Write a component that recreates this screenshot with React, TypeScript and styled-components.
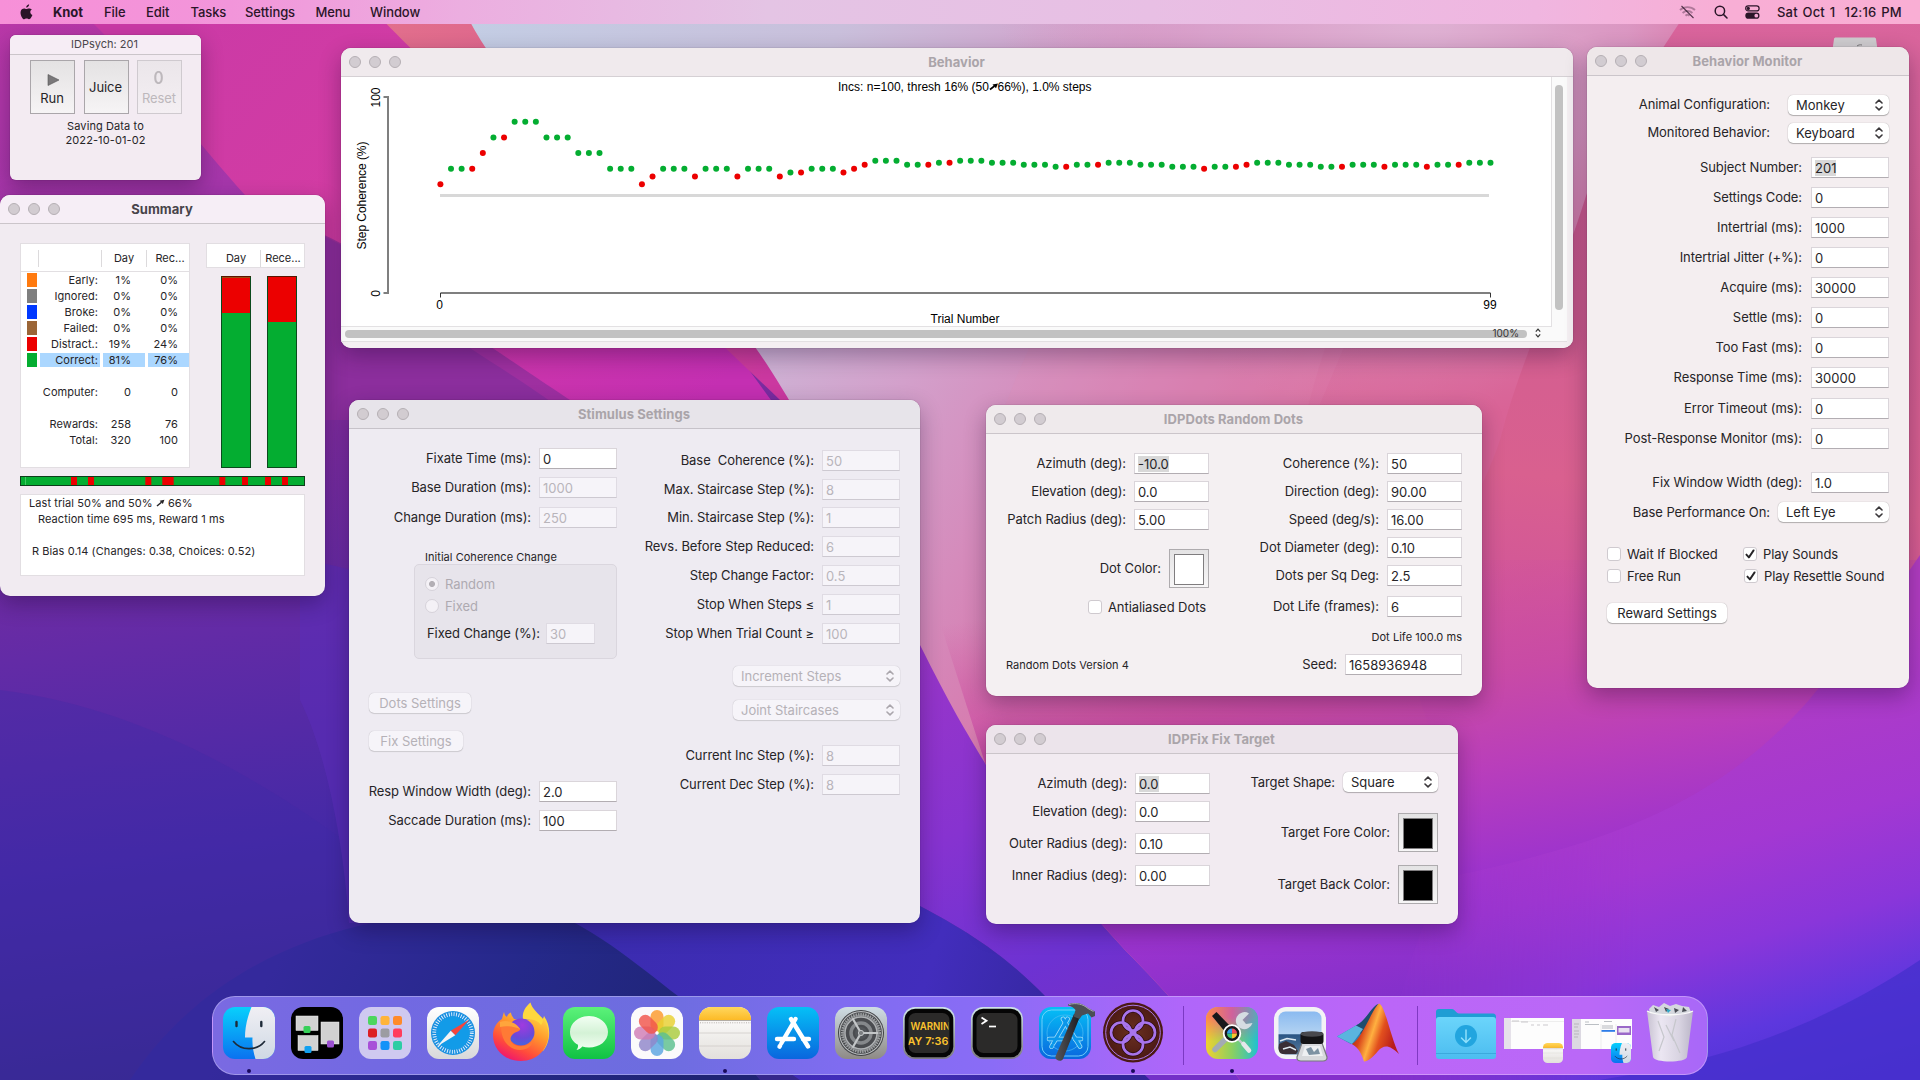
import React from 'react';
import styled, { createGlobalStyle } from 'styled-components';

const UI = `Inter, 'Liberation Sans', sans-serif`;
const HELV = `'Liberation Sans', Arial, sans-serif`;

const Global = createGlobalStyle`
  * { box-sizing: border-box; }
  html, body { margin: 0; padding: 0; }
  body { width: 1920px; height: 1080px; overflow: hidden; font-family: ${UI}; font-size: 13px; color: #262427; }
`;

/* ---------- desktop ---------- */

const Desktop = styled.div`
  position: relative;
  width: 1920px;
  height: 1080px;
  overflow: hidden;
  background: #8b2fc0;
`;

const WallpaperSvg = styled.svg`
  position: absolute;
  inset: 0;
  display: block;
`;

const DriveIcon = styled.svg`
  position: absolute;
  left: 1832px;
  top: 37px;
`;

function Wallpaper() {
  return (
    <WallpaperSvg width="1920" height="1080" viewBox="0 0 1920 1080" preserveAspectRatio="none">
      <defs>
        <linearGradient id="wBase" gradientUnits="userSpaceOnUse" x1="0" y1="0" x2="160" y2="1080">
          <stop offset="0" stopColor="#bc38a8" />
          <stop offset="0.2" stopColor="#a436aa" />
          <stop offset="0.42" stopColor="#7f2c9e" />
          <stop offset="0.6" stopColor="#632ba6" />
          <stop offset="0.8" stopColor="#4429a6" />
          <stop offset="1" stopColor="#35288c" />
        </linearGradient>
        <linearGradient id="wMag" gradientUnits="userSpaceOnUse" x1="200" y1="0" x2="640" y2="460">
          <stop offset="0" stopColor="#cb3aa6" />
          <stop offset="0.4" stopColor="#d33ca3" />
          <stop offset="1" stopColor="#c42fb2" />
        </linearGradient>
        <linearGradient id="wSalmon" gradientUnits="userSpaceOnUse" x1="380" y1="0" x2="760" y2="380">
          <stop offset="0" stopColor="#e2718c" />
          <stop offset="0.7" stopColor="#d8508e" />
          <stop offset="1" stopColor="#cb38a0" />
        </linearGradient>
        <linearGradient id="wPale" gradientUnits="userSpaceOnUse" x1="480" y1="0" x2="1400" y2="560">
          <stop offset="0" stopColor="#c3cde4" />
          <stop offset="0.3" stopColor="#c9bfdb" />
          <stop offset="0.52" stopColor="#d3a0cb" />
          <stop offset="0.72" stopColor="#d680b3" />
          <stop offset="0.88" stopColor="#da6c9d" />
          <stop offset="1" stopColor="#da6295" />
        </linearGradient>
        <radialGradient id="wLilac" gradientUnits="userSpaceOnUse" cx="1420" cy="0" r="420">
          <stop offset="0" stopColor="#dfb6d6" stopOpacity="0.95" />
          <stop offset="0.5" stopColor="#dba6cf" stopOpacity="0.75" />
          <stop offset="1" stopColor="#d98fbd" stopOpacity="0" />
        </radialGradient>
        <linearGradient id="wRose" gradientUnits="userSpaceOnUse" x1="1760" y1="0" x2="1680" y2="760">
          <stop offset="0" stopColor="#da659d" />
          <stop offset="0.3" stopColor="#cf5d92" />
          <stop offset="0.65" stopColor="#d9608f" />
          <stop offset="1" stopColor="#c94aa4" />
        </linearGradient>
        <linearGradient id="wFade" gradientUnits="userSpaceOnUse" x1="1180" y1="560" x2="1260" y2="1020">
          <stop offset="0.05" stopColor="#d0529e" stopOpacity="0" />
          <stop offset="0.35" stopColor="#c84aa6" stopOpacity="0.9" />
          <stop offset="0.55" stopColor="#b93ebb" />
          <stop offset="0.78" stopColor="#9c33ce" />
          <stop offset="1" stopColor="#8430cb" />
        </linearGradient>
        <linearGradient id="wNavy" gradientUnits="userSpaceOnUse" x1="340" y1="860" x2="700" y2="1080">
          <stop offset="0" stopColor="#34299c" />
          <stop offset="0.5" stopColor="#25298a" />
          <stop offset="1" stopColor="#1f2474" />
        </linearGradient>
        <linearGradient id="wIndigo" gradientUnits="userSpaceOnUse" x1="560" y1="900" x2="1060" y2="1080">
          <stop offset="0" stopColor="#3a2cae" />
          <stop offset="0.7" stopColor="#422dbc" />
          <stop offset="1" stopColor="#32269a" />
        </linearGradient>
        <linearGradient id="wViolet" gradientUnits="userSpaceOnUse" x1="900" y1="640" x2="1080" y2="1040">
          <stop offset="0" stopColor="#9a36c8" />
          <stop offset="0.45" stopColor="#8733d0" />
          <stop offset="0.8" stopColor="#6d32d2" />
          <stop offset="1" stopColor="#7430c8" />
        </linearGradient>
        <linearGradient id="wRight" gradientUnits="userSpaceOnUse" x1="1740" y1="660" x2="1860" y2="1080">
          <stop offset="0" stopColor="#b23dc2" />
          <stop offset="0.4" stopColor="#a338d2" />
          <stop offset="0.62" stopColor="#8a36da" />
          <stop offset="0.82" stopColor="#5d37de" />
          <stop offset="1" stopColor="#4a31d0" />
        </linearGradient>
        <linearGradient id="wRightEdge" gradientUnits="userSpaceOnUse" x1="1380" y1="0" x2="1640" y2="0">
          <stop offset="0" stopColor="#fff" stopOpacity="0" />
          <stop offset="1" stopColor="#fff" />
        </linearGradient>
        <mask id="wRightMask"><rect x="1300" y="480" width="620" height="600" fill="url(#wRightEdge)" /></mask>
      </defs>
      <rect width="1920" height="1080" fill="url(#wBase)" />
      <path d="M0 690 C160 710 300 800 420 900 L620 1080 H0Z" fill="#3f2aa6" opacity="0.35" />
      <path d="M90 20 C150 80 200 145 245 195 C290 225 320 233 341 245 C420 330 520 370 600 440 L800 440 L480 0 H70Z" fill="url(#wMag)" />
      <path d="M320 233 C400 270 450 320 491 347 C540 380 570 400 600 420 H325Z" fill="#8f2f9c" opacity="0.75" />
      <path d="M375 12 C420 60 560 190 780 400 L800 400 L468 0 H370Z" fill="url(#wSalmon)" />
      <path d="M300 560 C360 566 460 600 560 700 L700 923 H349 C345 860 330 760 300 700Z" fill="#5a2db8" opacity="0.6" />
      <path d="M130 1080 C230 930 420 890 580 924 C640 950 670 985 700 1010 L760 1080Z" fill="url(#wNavy)" />
      <path d="M560 915 C620 945 660 985 700 1012 L800 1080 H1160 C1110 1040 1070 1015 1045 996 C1010 960 970 930 900 896 L700 900Z" fill="url(#wIndigo)" />
      <path d="M880 600 L985 700 L1320 900 V1080 H1150 C1110 1040 1070 1015 1045 996 C1010 960 970 930 900 896Z" fill="url(#wViolet)" />
      <g id="coral">
        <path d="M460 0 C500 100 620 180 755 347 C800 410 860 530 920 645 C950 705 965 730 985 763 C1020 830 1070 890 1125 950 C1160 985 1200 1030 1240 1080 H1920 V0Z" fill="url(#wPale)" />
        <path d="M1240 24 C1190 80 1060 250 1000 420 L985 620 L1200 620 C1300 500 1400 200 1455 48 L1462 0 H1255Z" fill="#dd8fb8" opacity="0.22" />
        <path d="M1462 0 C1440 80 1340 260 1300 440 L1480 640 L1700 500 L1700 0Z" fill="#d9689a" opacity="0.28" />
        <rect x="1000" y="0" width="840" height="420" fill="url(#wLilac)" />
        <path d="M1695 0 C1640 80 1605 140 1586 196 C1560 280 1520 360 1500 440 C1480 500 1440 560 1400 640 L1460 820 L1920 800 V0Z" fill="url(#wRose)" />
        <path d="M920 560 H1920 V1080 H1240 C1200 1030 1160 985 1125 950 C1070 890 1020 830 985 763Z" fill="url(#wFade)" />
        <path d="M1920 555 C1890 600 1850 650 1809 700 C1720 800 1620 840 1458 875 C1420 900 1400 1000 1380 1080 H1920Z" fill="url(#wRight)" mask="url(#wRightMask)" />
      </g>
      <path d="M1600 1080 C1690 1066 1800 1040 1920 960 V1080Z" fill="#4630cd" opacity="0.8" />
    </WallpaperSvg>
  );
}

/* ---------- menu bar ---------- */

const MenuBar = styled.div`
  position: relative;
  display: flex;
  align-items: center;
  height: 24px;
  padding: 0 19px 1px 20px;
  background: linear-gradient(90deg, #f790d8 0%, #f295da 12%, #ecaee0 24%, #e4c4e4 40%, #e8bfe4 60%, #f0b6e0 80%, #f8aed5 90%, #f9aed4 100%);
`;

const MenuItem = styled.span<{ $w: number; $bold?: boolean }>`
  width: ${p => p.$w}px;
  font-weight: ${p => (p.$bold ? 700 : 450)};
  letter-spacing: -0.08px;
  color: #2a1528;
`;

const MenuSpacer = styled.div`
  flex: 1;
`;

const Clock = styled.span`
  margin-left: 17px;
  width: 124px;
  white-space: pre;
  text-align: right;
  letter-spacing: 0.2px;
  word-spacing: 1px;
  font-weight: 450;
  color: #2a1528;
`;

const AppleSvg = styled.svg`
  margin-right: 20px;
  flex: none;
`;

const StatusIcon = styled.svg<{ $ml: number }>`
  margin-left: ${p => p.$ml}px;
  flex: none;
`;

/* ---------- windows ---------- */

const Win = styled.section<{ $x: number; $y: number; $w: number; $h: number; $bg: string; $r?: number; $front?: boolean }>`
  position: absolute;
  left: ${p => p.$x}px;
  top: ${p => p.$y}px;
  width: ${p => p.$w}px;
  height: ${p => p.$h}px;
  display: flex;
  flex-direction: column;
  overflow: hidden;
  border-radius: ${p => p.$r ?? 10}px;
  background: ${p => p.$bg};
`;

const Shadow = styled.div<{ $x: number; $y: number; $w: number; $h: number; $r?: number }>`
  position: absolute;
  left: ${p => p.$x}px;
  top: ${p => p.$y}px;
  width: ${p => p.$w}px;
  height: ${p => p.$h}px;
  border-radius: ${p => p.$r ?? 10}px;
  box-shadow: 0 0 1px rgba(0, 0, 0, 0.5), 0 8px 22px rgba(20, 0, 40, 0.32);
`;

const TitleBar = styled.header<{ $bg: string; $line: string }>`
  display: grid;
  grid-template-columns: 60px 1fr 60px;
  align-items: center;
  flex: none;
  height: 29px;
  background: ${p => p.$bg};
  border-bottom: 1px solid ${p => p.$line};
`;

const Lights = styled.div`
  display: flex;
  gap: 8px;
  padding-left: 8px;
`;

const Light = styled.i`
  width: 12px;
  height: 12px;
  border-radius: 50%;
  background: #d2ccd1;
  border: 1px solid #b5afb4;
`;

const Title = styled.h1<{ $active?: boolean }>`
  margin: 0 1px 1px 0;
  text-align: center;
  font-size: 13px;
  line-height: 16px;
  font-weight: 700;
  letter-spacing: 0.05px;
  white-space: nowrap;
  color: ${p => (p.$active ? '#48444a' : '#aaa4a9')};
`;

interface WindowProps {
  x: number; y: number; w: number; h: number;
  bg: string; bar: string; line?: string; title: string; active?: boolean;
  children: React.ReactNode;
}

function Window({ x, y, w, h, bg, bar, line = '#cbc5ca', title, active, children }: WindowProps) {
  return (
    <>
      <Shadow $x={x} $y={y} $w={w} $h={h} />
      <Win $x={x} $y={y} $w={w} $h={h} $bg={bg}>
        <TitleBar $bg={bar} $line={line}>
          <Lights><Light /><Light /><Light /></Lights>
          <Title $active={active}>{title}</Title>
        </TitleBar>
        {children}
      </Win>
    </>
  );
}

/* ---------- form parts ---------- */

const Body = styled.div<{ $pad: string }>`
  display: flex;
  justify-content: space-between;
  flex: 1;
  padding: ${p => p.$pad};
`;

const Column = styled.div<{ $w: number; $pt?: number }>`
  display: flex;
  flex-direction: column;
  width: ${p => p.$w}px;
  padding-top: ${p => p.$pt ?? 0}px;
`;

const Row = styled.label<{ $mt?: number; $gap?: number; $left?: boolean; $pad?: string }>`
  display: flex;
  align-items: center;
  justify-content: ${p => (p.$left ? 'flex-start' : 'flex-end')};
  gap: ${p => p.$gap ?? 8}px;
  margin-top: ${p => p.$mt ?? 0}px;
  padding: ${p => p.$pad ?? '0'};
`;

const Label = styled.span<{ $up?: number }>`
  line-height: 16px;
  white-space: pre;
  letter-spacing: -0.07px;
  padding-bottom: ${p => p.$up ?? 1}px;
`;

const Field = styled.span<{ $w: number; $off?: boolean }>`
  flex: none;
  width: ${p => p.$w}px;
  height: 21px;
  padding: 0 3px;
  line-height: 20px;
  background: ${p => (p.$off ? '#f6f4f9' : '#ffffff')};
  border: 1px solid ${p => (p.$off ? '#dfdbe3' : '#dad5da')};
  border-bottom-color: ${p => (p.$off ? '#cdc9d1' : '#b2adb2')};
  color: ${p => (p.$off ? '#b9b5bb' : '#262427')};
`;

const Marked = styled.span`
  display: inline-block;
  height: 16px;
  line-height: 16px;
  background: #d8d8d8;
`;

const Pop = styled.span<{ $w: number; $off?: boolean }>`
  flex: none;
  display: flex;
  align-items: center;
  justify-content: space-between;
  width: ${p => p.$w}px;
  height: 20px;
  padding: 0 6px 0 8px;
  line-height: 19px;
  border-radius: 5px;
  background: ${p => (p.$off ? '#f6f4f9' : '#ffffff')};
  box-shadow: 0 0 1px rgba(0, 0, 0, ${p => (p.$off ? 0.25 : 0.35)}), 0 1px 1px rgba(0, 0, 0, ${p => (p.$off ? 0.12 : 0.25)});
  color: ${p => (p.$off ? '#b5b1b7' : '#262427')};
`;

function Popup({ w, off, children }: { w: number; off?: boolean; children: React.ReactNode }) {
  return (
    <Pop $w={w} $off={off}>
      {children}
      <svg width="8" height="12" viewBox="0 0 8 12" fill="none" stroke={off ? '#aaa6ac' : '#3a373a'} strokeWidth="1.6" strokeLinecap="round" strokeLinejoin="round">
        <path d="M1 4 4 1.2 7 4M1 8 4 10.8 7 8" />
      </svg>
    </Pop>
  );
}

const PushButton = styled.button<{ $w: number; $mt: number; $off?: boolean }>`
  display: block;
  width: ${p => p.$w}px;
  height: 20px;
  margin: ${p => p.$mt}px 0 0;
  padding: 0;
  border: 0;
  border-radius: 5px;
  font: 13px/19px ${UI};
  background: ${p => (p.$off ? '#f6f4f9' : '#ffffff')};
  box-shadow: 0 0 1px rgba(0, 0, 0, ${p => (p.$off ? 0.25 : 0.35)}), 0 1px 1px rgba(0, 0, 0, ${p => (p.$off ? 0.12 : 0.25)});
  color: ${p => (p.$off ? '#b5b1b7' : '#262427')};
`;

const Box = styled.span`
  flex: none;
  display: flex;
  align-items: center;
  justify-content: center;
  width: 14px;
  height: 14px;
  margin-bottom: 1px;
  border-radius: 3px;
  border: 1px solid #cfcacf;
  background: #fff;
`;

function Check({ on }: { on?: boolean }) {
  return (
    <Box>
      {on && (
        <svg width="12" height="12" viewBox="0 0 12 12" fill="none" stroke="#262427" strokeWidth="1.9" strokeLinecap="round" strokeLinejoin="round">
          <path d="M2.4 6.6 4.9 9.4 9.6 2.4" />
        </svg>
      )}
    </Box>
  );
}

const Radio = styled.span<{ $on?: boolean }>`
  width: 14px;
  height: 14px;
  border-radius: 50%;
  border: 1px solid #d6d2da;
  background: ${p => (p.$on ? 'radial-gradient(circle, #b3afb5 0 2.6px, #f4f1f6 3.4px)' : '#f4f1f6')};
`;

const Well = styled.span<{ $c: string }>`
  flex: none;
  width: 40px;
  height: 39px;
  padding: 4px;
  border: 1px solid #aeabae;
  background: linear-gradient(#e4e3e4, #f7f6f7);
  &::after {
    content: '';
    display: block;
    height: 29px;
    border: 1px solid #7f7d7f;
    background: ${p => p.$c};
  }
`;

const Small = styled.span<{ $mt: number; $right?: boolean; $pl?: number }>`
  display: block;
  height: 14px;
  margin-top: ${p => p.$mt}px;
  padding-left: ${p => p.$pl ?? 0}px;
  font-size: 11px;
  line-height: 14px;
  letter-spacing: 0.04px;
  white-space: pre;
  text-align: ${p => (p.$right ? 'right' : 'left')};
`;

interface FProps { label: string; value: string; w: number; mt?: number; gap?: number; off?: boolean; sel?: boolean }

function FormField({ label, value, w, mt, gap, off, sel }: FProps) {
  return (
    <Row $mt={mt} $gap={gap}>
      <Label>{label}</Label>
      <Field $w={w} $off={off}>{sel ? <Marked>{value}</Marked> : value}</Field>
    </Row>
  );
}

/* ---------- IDPsych palette ---------- */

const PaletteTitle = styled.div`
  flex: none;
  height: 20px;
  padding-right: 2px;
  line-height: 19px;
  font-size: 11px;
  text-align: center;
  color: #4a464b;
  background: #f6edf5;
  border-bottom: 1px solid #cbc5ca;
`;

const PaletteButtons = styled.div`
  display: flex;
  gap: 8.5px;
  padding: 5px 0 0 20px;
`;

const Bevel = styled.div<{ $off?: boolean }>`
  display: flex;
  flex-direction: column;
  align-items: center;
  justify-content: center;
  width: 45px;
  height: 54px;
  padding-right: 1px;
  border: 1px solid ${p => (p.$off ? '#cfcacf' : '#aaa6aa')};
  background: ${p => (p.$off ? 'linear-gradient(#ebe6ea, #f4eff3)' : 'linear-gradient(#e4e2e3, #f6f4f5)')};
  color: ${p => (p.$off ? '#bdb8bc' : '#262427')};
`;

const BevelText = styled.span<{ $pt?: number }>`
  line-height: 16px;
  letter-spacing: -0.1px;
  padding-top: ${p => p.$pt ?? 0}px;
`;

const PlayGlyph = styled.svg`
  margin: 5px 0 0 3px;
`;

const BevelZero = styled.span`
  height: 20px;
  line-height: 20px;
  font-size: 17px;
  font-weight: 600;
  transform: scaleX(0.9);
`;

const SavingText = styled.div`
  margin-top: 5px;
  text-align: center;
  font-size: 11px;
  line-height: 14px;
  letter-spacing: 0.1px;
`;

function PsychPalette() {
  return (
    <>
      <Shadow $x={10} $y={35} $w={191} $h={145} $r={6} />
      <Win $x={10} $y={35} $w={191} $h={145} $bg="#f3ebf2" $r={6}>
        <PaletteTitle>IDPsych: 201</PaletteTitle>
        <PaletteButtons>
          <Bevel>
            <PlayGlyph width="13" height="12" viewBox="0 0 13 12">
              <path d="M1 0.5 12 6 1 11.5Z" fill="#7a787a" stroke="#555" strokeWidth="0.6" />
            </PlayGlyph>
            <BevelText $pt={4}>Run</BevelText>
          </Bevel>
          <Bevel><BevelText>Juice</BevelText></Bevel>
          <Bevel $off><BevelZero>0</BevelZero><BevelText $pt={2}>Reset</BevelText></Bevel>
        </PaletteButtons>
        <SavingText>Saving Data to<br />2022-10-01-02</SavingText>
      </Win>
    </>
  );
}

/* ---------- Summary ---------- */

const SummaryBody = styled.div`
  display: flex;
  flex-direction: column;
  padding: 19px 20px 0;
  font-size: 11px;
`;

const SummaryTop = styled.div`
  display: flex;
  gap: 16px;
`;

const CountTable = styled.div`
  width: 170px;
  height: 225px;
  border: 1px solid #e2dee2;
  background: #fff;
`;

const HeadRow = styled.div<{ $cols: string }>`
  display: grid;
  grid-template-columns: ${p => p.$cols};
  height: 28px;
  padding: 6px 0 5px;
  border-bottom: 1px solid #e2dfe2;
  text-align: center;
  line-height: 17px;
`;

const HeadCell = styled.span<{ $sep?: boolean; $pl?: number }>`
  border-right: ${p => (p.$sep ? '1px solid #dcdadc' : '0')};
  padding-left: ${p => p.$pl ?? 0}px;
  white-space: nowrap;
`;

const CountRow = styled.div`
  display: grid;
  grid-template-columns: 10px 60px 42px 41px;
  column-gap: 3px;
  height: 16px;
  padding: 1px 0 1px 6px;
  line-height: 14px;
  text-align: right;
`;

const Cell = styled.span<{ $pr?: number; $hl?: boolean; $bg?: string }>`
  padding-right: ${p => p.$pr ?? 0}px;
  letter-spacing: 0.05px;
  background: ${p => p.$bg ?? (p.$hl ? '#abd7ff' : 'transparent')};
`;

const BarSide = styled.div`
  width: 99px;
`;

const BarHead = styled.div`
  display: grid;
  grid-template-columns: 54px 1fr;
  height: 25px;
  padding: 6px 0 1px;
  border: 1px solid #e2dee2;
  background: #fff;
  text-align: center;
  line-height: 17px;
`;

const BarPair = styled.div`
  display: flex;
  gap: 16px;
  margin-top: 8px;
  padding-left: 15px;
`;

const StackBar = styled.div`
  display: flex;
  flex-direction: column;
  width: 30px;
  height: 192px;
  border: 1px solid #0b4a1d;
  border-top-color: #5c1400;
`;

const BarPart = styled.i<{ $h?: number; $c: string }>`
  flex: ${p => (p.$h ? `0 0 ${p.$h}px` : 1)};
  background: ${p => p.$c};
`;

const Strip = styled.div`
  height: 10px;
  margin-top: 8px;
  border: 1px solid #0d3d1b;
  background: #04ad31;
`;

const LogBox = styled.div`
  height: 82px;
  margin-top: 8px;
  padding: 1px 0;
  border: 1px solid #e2dee2;
  background: #fff;
`;

const LogLine = styled.div<{ $pl: number }>`
  height: 16px;
  line-height: 15px;
  padding-left: ${p => p.$pl}px;
  white-space: pre;
  letter-spacing: 0.08px;
`;

const RED = '#ec0000';
const GREEN = '#04ad31';
const counts: [string | null, string, string, string][] = [
  ['#ff7a0f', 'Early:', '1%', '0%'],
  ['#7f7f7f', 'Ignored:', '0%', '0%'],
  ['#0038ff', 'Broke:', '0%', '0%'],
  ['#9b6536', 'Failed:', '0%', '0%'],
  [RED, 'Distract.:', '19%', '24%'],
  [GREEN, 'Correct:', '81%', '76%'],
  [null, '', '', ''],
  [null, 'Computer:', '0', '0'],
  [null, '', '', ''],
  [null, 'Rewards:', '258', '76'],
  [null, 'Total:', '320', '100'],
];
const stripMarks: [number, number][] = [[50, 6], [67, 6], [124.3, 6], [141.3, 11.4], [198.3, 6], [221, 6], [244, 6], [261, 6]];

function Arrow() {
  return (
    <svg width="9" height="8" viewBox="0 0 9 8">
      <path d="M1 7 5.5 3.2" stroke="currentColor" strokeWidth="1.5" />
      <path d="M8.4 0.8 3.6 1.8 6.9 5Z" fill="currentColor" />
    </svg>
  );
}

function Summary() {
  return (
    <Window x={0} y={195} w={325} h={401} bg="#f1ebf1" bar="#f6eef6" title="Summary" active>
      <SummaryBody>
        <SummaryTop>
          <CountTable>
            <HeadRow $cols="18px 63px 45px 1fr">
              <HeadCell $sep /><HeadCell $sep />
              <HeadCell $sep>Day</HeadCell><HeadCell $pl={4}>Rec...</HeadCell>
            </HeadRow>
            {counts.map(([c, name, day, rec], i) => (
              <CountRow key={i}>
                <Cell $bg={c ?? 'transparent'} />
                <Cell $pr={2} $hl={i === 5}>{name}</Cell>
                <Cell $pr={14} $hl={i === 5}>{day}</Cell>
                <Cell $pr={11} $hl={i === 5}>{rec}</Cell>
              </CountRow>
            ))}
          </CountTable>
          <BarSide>
            <BarHead><HeadCell $sep $pl={5}>Day</HeadCell><HeadCell $pl={1}>Rece...</HeadCell></BarHead>
            <BarPair>
              <StackBar><BarPart $h={1} $c="#9b4d10" /><BarPart $h={35} $c={RED} /><BarPart $c={GREEN} /></StackBar>
              <StackBar><BarPart $h={45} $c={RED} /><BarPart $c={GREEN} /></StackBar>
            </BarPair>
          </BarSide>
        </SummaryTop>
        <Strip>
          <svg width="283" height="8" viewBox="0 0 283 8" style={{ display: 'block' }}>
            <rect x="4" width="1" height="8" fill="#3fc862" />
            {stripMarks.map(([x, w]) => <rect key={x} x={x} width={w} height="8" fill={RED} />)}
          </svg>
        </Strip>
        <LogBox>
          <LogLine $pl={8}>Last trial 50% and 50% <Arrow /> 66%</LogLine>
          <LogLine $pl={17}>Reaction time 695 ms, Reward 1 ms</LogLine>
          <LogLine $pl={0}> </LogLine>
          <LogLine $pl={11}>R Bias 0.14 (Changes: 0.38, Choices: 0.52)</LogLine>
        </LogBox>
      </SummaryBody>
    </Window>
  );
}

/* ---------- Behavior plot ---------- */

const PlotArea = styled.div`
  display: grid;
  grid-template-columns: 1211px 15px 1fr;
  grid-template-rows: 250px 15px 1fr;
  flex: 1;
  background: #f4eff2;
`;

const Plot = styled.div`
  background: #fff;
  border-right: 1px solid #e3e1e3;
  border-bottom: 1px solid #e3e1e3;
`;

const VTrack = styled.div`
  padding: 8px 0 0 3px;
  background: #fafafa;
`;

const VThumb = styled.div`
  width: 8px;
  height: 225px;
  border-radius: 4px;
  background: #c2c2c2;
`;

const HTrack = styled.div`
  grid-column: 1 / 3;
  display: flex;
  padding: 3px 0 0 4px;
  background: #fafafa;
  border-bottom: 1px solid #e3e0e2;
`;

const HThumb = styled.div`
  display: flex;
  justify-content: flex-end;
  width: 1182px;
  height: 8px;
  padding-right: 8px;
  border-radius: 4px;
  background: #c2c2c2;
  font-size: 10px;
  line-height: 6px;
  color: #333;
`;

const ZoomArrows = styled.svg`
  margin: -2px 0 0 8px;
`;

const seq =
  'r8 g16 g16 r16 r24 g32 r32 g40 g40 g40 g32 g32 g32 g24 g24 g24 g16 g16 g16 r8 r12 g16 g16 g16 r12 g16 g16 g16 r12 g16 g16 g16 r12 g14 r14 g16 g16 g16 r14 r16 r18 g20 g20 g20 g18 g18 r18 g19 r19 g20 g20 g20 g19 g19 g19 g18 g18 g18 g17 r17 g18 g18 r18 g19 g19 g19 g18 g18 g18 g17 g17 g17 r16 g17 g17 r17 r18 g19 g19 g19 g18 g18 g18 g17 g17 r17 g18 g18 g18 r17 g18 g18 g18 r17 g18 g18 r18 g19 g19 g19'.split(' ');

function BehaviorPlot() {
  return (
    <svg width="1209" height="248" viewBox="341 77 1209 248" style={{ display: 'block' }} fontFamily={HELV} fontSize="12" fill="#000">
      <g stroke="#7f7f7f" strokeWidth="2" fill="none">
        <path d="M383.500 97H388V293H383.500" />
        <path d="M440.500 293H1490.500" />
      </g>
      <path d="M440.500 293V297.500M1490.500 293V297.500" stroke="#333" strokeWidth="1" />
      <path d="M440 195.500H1489" stroke="#d8d8d8" strokeWidth="3" />
      {seq.map((s, i) => (
        <circle key={i} cx={440.4 + i * 10.607} cy={200 - Number(s.slice(1)) * 1.957} r="3" fill={s[0] === 'r' ? RED : GREEN} />
      ))}
      <text x="838" y="91" textLength="151" lengthAdjust="spacing">Incs: n=100, thresh 16% (50</text>
      <path d="M990 89.500 994.500 86" stroke="#000" strokeWidth="1.600" />
      <path d="M998 83.500 992.500 84.500 996 88.200Z" />
      <text x="997.500" y="91" textLength="94" lengthAdjust="spacing">66%), 1.0% steps</text>
      <text x="965" y="322.500" textAnchor="middle">Trial Number</text>
      <text x="439.600" y="309" textAnchor="middle">0</text>
      <text x="1490" y="309" textAnchor="middle">99</text>
      <text transform="translate(366 195.500) rotate(-90)" textAnchor="middle" textLength="108">Step Coherence (%)</text>
      <text transform="translate(380 97.500) rotate(-90)" textAnchor="middle">100</text>
      <text transform="translate(380 293.500) rotate(-90)" textAnchor="middle">0</text>
    </svg>
  );
}

function Behavior() {
  return (
    <Window x={341} y={48} w={1232} h={300} bg="#f4eff2" bar="#f0eaed" line="#d5d0d4" title="Behavior">
      <PlotArea>
        <Plot><BehaviorPlot /></Plot>
        <VTrack><VThumb /></VTrack>
        <span />
        <HTrack>
          <HThumb>100%</HThumb>
          <ZoomArrows width="6" height="10" viewBox="0 0 6 10" fill="none" stroke="#333" strokeWidth="1.2">
            <path d="M0.8 3.6 3 1.2 5.2 3.6M0.8 6.4 3 8.8 5.2 6.4" />
          </ZoomArrows>
        </HTrack>
        <span />
      </PlotArea>
    </Window>
  );
}

/* ---------- Stimulus settings ---------- */

const GroupBox = styled.div`
  height: 95px;
  margin-left: 45px;
  padding: 11px 21px 0 10px;
  border: 1px solid #dad6de;
  border-radius: 5px;
  background: #e7e4eb;
`;

const RadioRow = styled.label<{ $mt?: number }>`
  display: flex;
  align-items: center;
  gap: 6px;
  height: 16px;
  margin-top: ${p => p.$mt ?? 0}px;
  letter-spacing: -0.07px;
  color: #aeaab1;
`;

function Stimulus() {
  return (
    <Window x={349} y={400} w={571} h={523} bg="#eeebf2" bar="#e7e4ea" line="#c6c2c9" title="Stimulus Settings">
      <Body $pad="0 20px">
        <Column $w={248} $pt={19}>
          <FormField label="Fixate Time (ms):" value="0" w={78} />
          <FormField label="Base Duration (ms):" value="1000" w={78} mt={8} off />
          <FormField label="Change Duration (ms):" value="250" w={78} mt={9} off />
          <Small $mt={22} $pl={56}>Initial Coherence Change</Small>
          <GroupBox>
            <RadioRow><Radio $on />Random</RadioRow>
            <RadioRow $mt={6}><Radio />Fixed</RadioRow>
            <FormField label="Fixed Change (%):" value="30" w={49} mt={9} gap={6} off />
          </GroupBox>
          <PushButton $w={102} $mt={34} $off>Dots Settings</PushButton>
          <PushButton $w={94} $mt={18} $off>Fix Settings</PushButton>
          <FormField label="Resp Window Width (deg):" value="2.0" w={78} mt={30} />
          <FormField label="Saccade Duration (ms):" value="100" w={78} mt={8} />
        </Column>
        <Column $w={255} $pt={21}>
          <FormField label="Base  Coherence (%):" value="50" w={78} off />
          <FormField label="Max. Staircase Step (%):" value="8" w={78} mt={8} off />
          <FormField label="Min. Staircase Step (%):" value="1" w={78} mt={7} off />
          <FormField label="Revs. Before Step Reduced:" value="6" w={78} mt={8} off />
          <FormField label="Step Change Factor:" value="0.5" w={78} mt={8} off />
          <FormField label="Stop When Steps ≤" value="1" w={78} mt={8} off />
          <FormField label="Stop When Trial Count ≥" value="100" w={78} mt={8} off />
          <Row $mt={22}><Popup w={167} off>Increment Steps</Popup></Row>
          <Row $mt={14}><Popup w={167} off>Joint Staircases</Popup></Row>
          <FormField label="Current Inc Step (%):" value="8" w={78} mt={25} off />
          <FormField label="Current Dec Step (%):" value="8" w={78} mt={8} off />
        </Column>
      </Body>
    </Window>
  );
}

/* ---------- Random dots ---------- */

function RandomDots() {
  return (
    <Window x={986} y={405} w={496} h={291} bg="#f4f0f2" bar="#efeaec" title="IDPDots Random Dots">
      <Body $pad="19px 20px 0">
        <Column $w={203}>
          <FormField label="Azimuth (deg):" value="-10.0" w={75} sel />
          <FormField label="Elevation (deg):" value="0.0" w={75} mt={7} />
          <FormField label="Patch Radius (deg):" value="5.00" w={75} mt={7} />
          <Row $mt={19}><Label>Dot Color:</Label><Well $c="#ffffff" /></Row>
          <Row $mt={11} $gap={6} $pad="0 3px 0 0"><Check /><Label>Antialiased Dots</Label></Row>
          <Small $mt={42}>Random Dots Version 4</Small>
        </Column>
        <Column $w={220}>
          <FormField label="Coherence (%):" value="50" w={75} />
          <FormField label="Direction (deg):" value="90.00" w={75} mt={7} />
          <FormField label="Speed (deg/s):" value="16.00" w={75} mt={7} />
          <FormField label="Dot Diameter (deg):" value="0.10" w={75} mt={7} />
          <FormField label="Dots per Sq Deg:" value="2.5" w={75} mt={7} />
          <FormField label="Dot Life (frames):" value="6" w={75} mt={10} />
          <Small $mt={13} $right>Dot Life 100.0 ms</Small>
          <FormField label="Seed:" value="1658936948" w={117} mt={10} />
        </Column>
      </Body>
    </Window>
  );
}

/* ---------- Fix target ---------- */

function FixTarget() {
  return (
    <Window x={986} y={725} w={472} h={199} bg="#f2ebf1" bar="#ece4eb" title="IDPFix Fix Target">
      <Body $pad="0 20px">
        <Column $w={204} $pt={19}>
          <FormField label="Azimuth (deg):" value="0.0" w={75} sel />
          <FormField label="Elevation (deg):" value="0.0" w={75} mt={7} />
          <FormField label="Outer Radius (deg):" value="0.10" w={75} mt={11} />
          <FormField label="Inner Radius (deg):" value="0.00" w={75} mt={11} />
        </Column>
        <Column $w={200} $pt={18}>
          <Row><Label $up={0}>Target Shape:</Label><Popup w={95}>Square</Popup></Row>
          <Row $mt={21}><Label>Target Fore Color:</Label><Well $c="#000000" /></Row>
          <Row $mt={13}><Label>Target Back Color:</Label><Well $c="#000000" /></Row>
        </Column>
      </Body>
    </Window>
  );
}

/* ---------- Behavior monitor ---------- */

const CheckGrid = styled.div`
  display: grid;
  grid-template-columns: 136px 1fr;
  row-gap: 5px;
  margin-top: 24px;
`;

function Monitor() {
  const rows: [string, string, number][] = [
    ['Subject Number:', '201', 14],
    ['Settings Code:', '0', 9],
    ['Intertrial (ms):', '1000', 9],
    ['Intertrial Jitter (+%):', '0', 9],
    ['Acquire (ms):', '30000', 9],
    ['Settle (ms):', '0', 9],
    ['Too Fast (ms):', '0', 9],
    ['Response Time (ms):', '30000', 9],
    ['Error Timeout (ms):', '0', 10],
    ['Post-Response Monitor (ms):', '0', 9],
    ['Fix Window Width (deg):', '1.0', 23],
  ];
  return (
    <Window x={1587} y={47} w={322} h={641} bg="#f4eef0" bar="#eee7e9" title="Behavior Monitor">
      <Body $pad="19px 20px 0">
        <Column $w={282}>
          <Row $gap={18}><Label $up={3}>Animal Configuration:</Label><Popup w={101}>Monkey</Popup></Row>
          <Row $gap={18} $mt={8}><Label $up={3}>Monitored Behavior:</Label><Popup w={101}>Keyboard</Popup></Row>
          {rows.map(([l, v, mt], i) => (
            <FormField key={l} label={l} value={v} w={78} mt={mt} gap={9} sel={i === 0} />
          ))}
          <Row $mt={9}><Label $up={0}>Base Performance On:</Label><Popup w={111}>Left Eye</Popup></Row>
          <CheckGrid>
            <Row $left $gap={6}><Check /><Label>Wait If Blocked</Label></Row>
            <Row $left $gap={6}><Check on /><Label>Play Sounds</Label></Row>
            <Row $left $gap={6}><Check /><Label>Free Run</Label></Row>
            <Row $left $gap={6} $pad="0 0 0 1px"><Check on /><Label>Play Resettle Sound</Label></Row>
          </CheckGrid>
          <PushButton $w={120} $mt={18}>Reward Settings</PushButton>
        </Column>
      </Body>
    </Window>
  );
}

/* ---------- Dock ---------- */

const DockBar = styled.nav`
  position: absolute;
  left: 212px;
  top: 996px;
  display: flex;
  width: 1496px;
  height: 79px;
  padding: 10px 0 0 2px;
  border-radius: 23px;
  border: 1px solid rgba(255, 255, 255, 0.3);
  background: linear-gradient(90deg, #7a6ae2 0%, #7269e2 12%, #6d6ddf 30%, #7f6cf0 42%, #8a6cf6 52%, #b066fa 65%, #bb66f8 78%, #ba68f7 92%, #a868f8 100%);
`;

const Slot = styled.div<{ $ml?: number }>`
  flex: none;
  display: flex;
  flex-direction: column;
  align-items: center;
  width: 68px;
  margin-left: ${p => p.$ml ?? 0}px;
  svg { overflow: visible; display: block; }
`;

const RunDot = styled.i`
  width: 4px;
  height: 4px;
  margin-top: 10px;
  border-radius: 50%;
  background: #190a5c;
`;

const Divider = styled.i<{ $m: string }>`
  flex: none;
  width: 1px;
  height: 59px;
  margin: ${p => p.$m};
  background: rgba(80, 20, 150, 0.55);
`;

const ThumbSlot = styled.div`
  flex: none;
  display: flex;
  flex-direction: column;
  width: 68px;
  padding: 11px 4px 0;
  svg { overflow: visible; display: block; }
`;

function Icon({ children }: { children: React.ReactNode }) {
  return <svg width="52" height="52" viewBox="0 0 52 52">{children}</svg>;
}

function FinderArt() {
  return (
    <>
      <clipPath id="fc"><rect width="52" height="52" rx="12" /></clipPath>
      <g clipPath="url(#fc)">
        <rect width="52" height="52" fill="url(#gBlue)" />
        <path d="M28.500 0C23.500 12 22 22 22 30.500H29.500C29 38 30.500 46 32.500 52H52V0Z" fill="url(#gSilver)" />
        <path d="M10.500 34.500C18 44 34 44 41.500 34.500" fill="none" stroke="#1e2a38" strokeWidth="1.600" strokeLinecap="round" />
        <path d="M13.500 15V19M38.300 15V19" stroke="#1e2a38" strokeWidth="2.400" strokeLinecap="round" />
      </g>
    </>
  );
}

function NotesArt() {
  return (
    <>
      <clipPath id="nc"><rect width="52" height="52" rx="12" /></clipPath>
      <g clipPath="url(#nc)">
        <rect width="52" height="52" fill="url(#gPaper)" />
        <rect width="52" height="13" fill="url(#gYellow)" />
        <path d="M0 13.500H52" stroke="#a9a39a" strokeWidth="0.900" />
        <path d="M1 15.800H52" stroke="#b5b0aa" strokeWidth="1" strokeDasharray="1 1.300" />
        <path d="M0 26H52M0 39H52" stroke="#cfccc8" strokeWidth="0.800" />
      </g>
    </>
  );
}

function AppStoreGlyph({ w, c }: { w: number; c: string }) {
  return (
    <g stroke={c} strokeWidth={w} strokeLinecap="round" fill="none">
      <path d="M28.500 12 14.500 36" />
      <path d="M24 12 41 39.500" />
      <path d="M10 32H27M36 32H42" />
      <path d="M13.200 38.500 12.500 39.700" />
    </g>
  );
}

const petals = ['#fb9a2b', '#e8d12f', '#a9cc3d', '#5cc08e', '#5aa5e0', '#8f86c9', '#cf7db4', '#f0564a'];
const pads = ['#4cd65f', '#ffb43a', '#ff8a2a', '#dc1f24', '#9c9ca2', '#ff3e5c', '#a84fd8', '#1492f8', '#2ccda4'];

const DefsSvg = styled.svg`
  position: absolute;
`;

function Defs() {
  return (
    <DefsSvg width="0" height="0">
      <defs>
        <linearGradient id="gBlue" x2="0" y2="1"><stop stopColor="#08d0fc" /><stop offset="1" stopColor="#0a72f0" /></linearGradient>
        <linearGradient id="gSilver" x2="0" y2="1"><stop stopColor="#f0eff4" /><stop offset="1" stopColor="#cfd9e4" /></linearGradient>
        <linearGradient id="gPaper" x2="0" y2="1"><stop offset="0.200" stopColor="#fbfaf9" /><stop offset="1" stopColor="#e3e0dc" /></linearGradient>
        <linearGradient id="gYellow" x2="0" y2="1"><stop stopColor="#ffd75e" /><stop offset="1" stopColor="#fcba26" /></linearGradient>
        <linearGradient id="gWhite" x2="0" y2="1"><stop stopColor="#ffffff" /><stop offset="1" stopColor="#d8d8da" /></linearGradient>
        <linearGradient id="gGreen" x2="0" y2="1"><stop stopColor="#5cf27a" /><stop offset="1" stopColor="#10c243" /></linearGradient>
        <linearGradient id="gBubble" x2="0" y2="1"><stop stopColor="#f2fff3" /><stop offset="0.500" stopColor="#d4f2d6" /><stop offset="1" stopColor="#f4fff4" /></linearGradient>
        <linearGradient id="gStore" x2="0" y2="1"><stop stopColor="#05c0f6" /><stop offset="1" stopColor="#0a66de" /></linearGradient>
        <linearGradient id="gPref" x2="0" y2="1"><stop stopColor="#cfdde4" /><stop offset="1" stopColor="#8e8a86" /></linearGradient>
        <linearGradient id="gFrame" x2="0" y2="1"><stop stopColor="#cfe4ea" /><stop offset="1" stopColor="#7c7a7e" /></linearGradient>
        <linearGradient id="gFox" x1="0.900" y1="0" x2="0.300" y2="1"><stop stopColor="#ffe14a" /><stop offset="0.400" stopColor="#ff9a2c" /><stop offset="0.750" stopColor="#ff4a3c" /><stop offset="1" stopColor="#ee1470" /></linearGradient>
        <radialGradient id="gGlobe" cx="0.550" cy="0.250" r="0.800"><stop stopColor="#a03ae0" /><stop offset="0.600" stopColor="#6a49d8" /><stop offset="1" stopColor="#3f6adf" /></radialGradient>
        <linearGradient id="gSyncTop"><stop stopColor="#ff8a4a" /><stop offset="0.500" stopColor="#d0609c" /><stop offset="1" stopColor="#5aa8b8" /></linearGradient>
        <linearGradient id="gSyncLow"><stop stopColor="#f0d030" /><stop offset="0.500" stopColor="#8cd060" /><stop offset="1" stopColor="#20c0d0" /></linearGradient>
        <linearGradient id="gSyncFade" x2="0" y2="1"><stop offset="0.200" stopColor="#fff" /><stop offset="0.650" stopColor="#000" /></linearGradient>
        <mask id="mSync"><rect width="52" height="52" fill="url(#gSyncFade)" /></mask>
        <linearGradient id="gSea" x2="0" y2="1"><stop stopColor="#8abaf0" /><stop offset="0.520" stopColor="#b3d3f2" /><stop offset="0.540" stopColor="#2b5684" /><stop offset="1" stopColor="#54779a" /></linearGradient>
        <linearGradient id="gMat" x1="0" y1="0" x2="1" y2="0.400"><stop stopColor="#7a1512" /><stop offset="0.350" stopColor="#d8431a" /><stop offset="0.550" stopColor="#ffb040" /><stop offset="0.720" stopColor="#e2501e" /><stop offset="1" stopColor="#b81c1c" /></linearGradient>
        <linearGradient id="gFold" x2="0" y2="1"><stop stopColor="#6bd5fb" /><stop offset="1" stopColor="#4cbdf0" /></linearGradient>
        <linearGradient id="gTrash" x2="1"><stop stopColor="#c9c9ce" /><stop offset="0.300" stopColor="#f0f0f2" /><stop offset="0.700" stopColor="#dcdce0" /><stop offset="1" stopColor="#bcbcc4" /></linearGradient>
        <linearGradient id="gHandle" x2="1"><stop stopColor="#55565c" /><stop offset="1" stopColor="#1c1c20" /></linearGradient>
        <radialGradient id="gWood"><stop stopColor="#6a3020" /><stop offset="1" stopColor="#4a1814" /></radialGradient>
      </defs>
    </DefsSvg>
  );
}

function Dock() {
  return (
    <DockBar>
      <Defs />
      <Slot><Icon><FinderArt /></Icon><RunDot /></Slot>
      <Slot>
        <Icon>
          <rect width="52" height="52" rx="12" fill="#000" />
          <g fill="#d2d2d2" stroke="#f2f2f2" strokeWidth="0.500">
            <rect x="5" y="9" width="22" height="14.500" /><rect x="30" y="15" width="18" height="22" /><rect x="7" y="28.500" width="20" height="15" />
          </g>
          <rect x="12.500" y="19" width="7" height="7" rx="1.500" fill="#36d058" />
          <rect x="13.500" y="39" width="7" height="7" rx="1.500" fill="#12a0f0" />
          <rect x="36" y="33.500" width="7" height="7" rx="1.500" fill="#9a4fd0" />
        </Icon>
      </Slot>
      <Slot>
        <Icon>
          <rect width="52" height="52" rx="12" fill="#cfc9f0" />
          {pads.map((c, i) => (
            <rect key={c} x={9 + (i % 3) * 12.5} y={9 + Math.floor(i / 3) * 12.5} width="9" height="9" rx="2.200" fill={c} />
          ))}
        </Icon>
      </Slot>
      <Slot>
        <Icon>
          <rect width="52" height="52" rx="12" fill="url(#gWhite)" />
          <circle cx="26" cy="26" r="22" fill="#1a8fe0" />
          <circle cx="26" cy="26" r="18.700" fill="none" stroke="#e8f4ff" strokeWidth="4" strokeDasharray="0.900 1.550" />
          <circle cx="26" cy="26" r="16.600" fill="#129be8" />
          <path d="M42.500 12.500 28.300 28.200 23.700 23.700Z" fill="#f5453c" />
          <path d="M10 39.500 23.700 23.700 28.300 28.200Z" fill="#f3f3f5" />
        </Icon>
      </Slot>
      <Slot>
        <Icon>
          <path d="M35.500 -4.500C30 0 27 6 28 12C34 12 40 14 42 18C47 24 44 34 36 38L48 44C55 36 57 20 49 9L48 12C45 8 37 2 35.500 -4.500Z" fill="#ffd83e" />
          <path d="M9 5C8 8 7.500 10 7 12C2 15 -2 21 -2 28C-2 43 10 54 26 54C42 54 53 42 53.500 28C53.500 22 51.500 15 48 11C48 15 47 17 46 18C42 12 35 12 29 13L19 12C18 10 16 8 16 5.500C13 6.500 12 9 12 10C10 9 9.500 7 9 5Z" fill="url(#gFox)" />
          <circle cx="26" cy="25" r="13.500" fill="url(#gGlobe)" />
          <path d="M6 18C11 15 17 19 21 20C24 20.500 26 21.500 25 23C23 25 20 25 18 27C14 31 15 35 20 38C27 41 36 38 39 32C37 44 22 46 14 39C8 34 6 27 6 18Z" fill="#ff7a35" />
          <path d="M5 15C11 13 20 14 25 22C20 20 12 18 5 20Z" fill="#ffa53c" />
        </Icon>
      </Slot>
      <Slot>
        <Icon>
          <rect width="52" height="52" rx="12" fill="url(#gGreen)" />
          <path d="M26 9C36.500 9 45 16 45 25C45 34 36.500 40.500 26 40.500C23.500 40.500 21.300 40.200 19.200 39.500C18 41.200 16 42.500 13.500 43C14.800 41.500 15.300 39.800 15 37.800C10 35 7 30.500 7 25C7 16 15.500 9 26 9Z" fill="url(#gBubble)" />
        </Icon>
      </Slot>
      <Slot>
        <Icon>
          <rect width="52" height="52" rx="12" fill="#fbfafb" />
          {petals.map((c, i) => (
            <rect key={c} x="19.500" y="3" width="13" height="21.500" rx="6.500" fill={c} opacity="0.820" transform={`rotate(${i * 45} 26 26)`} />
          ))}
          <circle cx="26" cy="26" r="1.400" fill="#fff" />
        </Icon>
      </Slot>
      <Slot><Icon><NotesArt /></Icon><RunDot /></Slot>
      <Slot>
        <Icon>
          <rect width="52" height="52" rx="12" fill="url(#gStore)" />
          <AppStoreGlyph w={4.4} c="#fff" />
        </Icon>
      </Slot>
      <Slot>
        <Icon>
          <rect width="52" height="52" rx="12" fill="url(#gPref)" />
          <circle cx="26" cy="26" r="23" fill="#3f4144" />
          <circle cx="26" cy="26" r="21.400" fill="none" stroke="#b9bcbe" strokeWidth="1.200" />
          <circle cx="26" cy="26" r="18.600" fill="#77797c" stroke="#9b9ea0" strokeWidth="3" strokeDasharray="1.500 0.900" />
          <circle cx="26" cy="26" r="16" fill="#4a4c50" stroke="#b0b3b5" strokeWidth="1.400" />
          <circle cx="26" cy="26" r="10" fill="none" stroke="#85888b" strokeWidth="3.500" />
          <circle cx="26" cy="26" r="6" fill="#53565a" />
          <path d="M26 26H43M26 26 17.500 11.300M26 26 17.500 40.700" stroke="#c3c6c8" strokeWidth="2.200" />
          <circle cx="26" cy="26" r="2.600" fill="#7c7f82" stroke="#c3c6c8" strokeWidth="1" />
        </Icon>
      </Slot>
      <Slot>
        <Icon>
          <rect width="52" height="52" rx="12" fill="url(#gFrame)" />
          <rect x="1.700" y="1.700" width="48.600" height="48.600" rx="10.500" fill="#050505" />
          <rect x="5.500" y="6" width="41" height="40" rx="7" fill="#2b2a29" />
          <clipPath id="wc"><rect x="5.500" y="6" width="40" height="40" /></clipPath>
          <g clipPath="url(#wc)" fill="#fbc32e" fontFamily={UI} fontSize="11" fontWeight="600">
            <text x="7.500" y="22.500" textLength="47" lengthAdjust="spacingAndGlyphs">WARNING</text>
            <text x="4.500" y="37.500" textLength="41" lengthAdjust="spacingAndGlyphs">AY 7:36</text>
          </g>
        </Icon>
      </Slot>
      <Slot>
        <Icon>
          <rect width="52" height="52" rx="12" fill="url(#gFrame)" />
          <rect x="1.700" y="1.700" width="48.600" height="48.600" rx="10.500" fill="#050505" />
          <rect x="5.500" y="6" width="41" height="40" rx="7" fill="#2b2a29" />
          <path d="M10.500 10.500 15.500 13.700 10.500 17" fill="none" stroke="#fff" strokeWidth="1.800" />
          <path d="M18 19.500H25" stroke="#fff" strokeWidth="1.700" />
        </Icon>
      </Slot>
      <Slot>
        <Icon>
          <rect width="52" height="52" rx="12" fill="url(#gStore)" />
          <rect x="3" y="3" width="46" height="46" rx="9.500" fill="none" stroke="#7ad6fa" strokeWidth="0.900" />
          <circle cx="26" cy="26" r="18" fill="none" stroke="#4fbcf4" strokeWidth="0.700" />
          <AppStoreGlyph w={4.6} c="#a4def8" />
          <AppStoreGlyph w={3.2} c="#0a97ea" />
          <path d="M35 7 41 9.500 24 52C22.500 55.500 15.500 53.500 16.500 49.500Z" fill="url(#gHandle)" />
          <path d="M29 -2.500C36 -5.500 44 -3.500 49 1L56 4.500V9L52.500 10.500 49 6.500 43 8.500 40.500 12 34.500 9.500 36.500 3C34.500 0.500 32 -1 29 -1.500Z" fill="#4b4e55" />
          <path d="M30 -2.500C37 -4.500 44 -3 49 1.500L54.500 4.500" fill="none" stroke="#a5a9b0" strokeWidth="1" />
        </Icon>
      </Slot>
      <Slot>
        <Icon>
          <circle cx="26" cy="25.500" r="30" fill="url(#gWood)" />
          <circle cx="26" cy="25.500" r="27.300" fill="none" stroke="#a97ae8" strokeWidth="1" />
          <g fill="none" stroke="#2a0c10" strokeWidth="4.200">
            <circle cx="26" cy="13.500" r="10" /><circle cx="26" cy="37.500" r="10" />
            <circle cx="14" cy="25.500" r="10" /><circle cx="38" cy="25.500" r="10" />
          </g>
          <g fill="none" stroke="#a874ec" strokeWidth="2.700">
            <circle cx="26" cy="13.500" r="10" /><circle cx="26" cy="37.500" r="10" />
            <circle cx="14" cy="25.500" r="10" /><circle cx="38" cy="25.500" r="10" />
          </g>
          <path d="M21.500 21 30.500 30M30.500 21 21.500 30" stroke="#a874ec" strokeWidth="2.700" />
        </Icon>
        <RunDot />
      </Slot>
      <Divider $m="-1px 0 0 16px" />
      <Slot $ml={14}>
        <Icon>
          <rect width="52" height="52" rx="12" fill="url(#gSyncLow)" />
          <rect width="52" height="52" rx="12" fill="url(#gSyncTop)" mask="url(#mSync)" />
          <path d="M6 9 10.500 5 26 21 20 26Z" fill="#17181b" />
          <path d="M28 28 39 39" stroke="#c6cad0" strokeWidth="2.400" strokeLinecap="round" />
          <path d="M37.500 37 43 43.500" stroke="#e4e7ea" strokeWidth="4.600" strokeLinecap="round" />
          <path d="M9 42.500 36 16" stroke="#a3abb3" strokeWidth="5.500" strokeLinecap="round" />
          <path d="M43 6.500A8.500 8.500 0 1 0 46.500 16L40 17 36.500 13Z" fill="#d5dce2" />
          <circle cx="26" cy="26.500" r="8.300" fill="#17181b" stroke="#fff" strokeWidth="1.800" />
          <path d="M26 26.500V21.500A5 5 0 0 1 31 26.500Z" fill="#ef4a5a" /><path d="M26 26.500H31A5 5 0 0 1 26 31.500Z" fill="#f7c52c" />
          <path d="M26 26.500V31.500A5 5 0 0 1 21 26.500Z" fill="#38c46c" /><path d="M26 26.500H21A5 5 0 0 1 26 21.500Z" fill="#2e9ce8" />
        </Icon>
        <RunDot />
      </Slot>
      <Slot>
        <Icon>
          <rect width="52" height="52" rx="12" fill="#f3f3f5" />
          <rect x="4.500" y="4.500" width="43" height="43" rx="7" fill="url(#gSea)" />
          <path d="M5 37 12 34 20 38 24 44 22 47H9C6 47 4.500 44 4.500 41Z" fill="#3a2f35" />
          <path d="M6 34 13 31.500 22 33M9 42 16 40 22 43" stroke="#dfe9f1" strokeWidth="1.500" fill="none" />
          <path d="M28 36H48L53 50C53.500 53 51 54 49 54H27C24.500 54 22.500 53 23 50Z" fill="#d7d9dc" stroke="#77797c" strokeWidth="1.200" />
          <path d="M31 39H46L49 49H28Z" fill="#eef0f2" />
          <path d="M32 42 37 40 40 45 44 41 46 47 35 48Z" fill="#7d93a3" />
          <rect x="26.500" y="25" width="23" height="12" rx="3" fill="#141416" />
          <ellipse cx="38" cy="27" rx="11.500" ry="2.800" fill="#48494d" />
        </Icon>
      </Slot>
      <Slot>
        <Icon>
          <path d="M-5 29.500 14 18.500C24 14 30 -1 37 -3L31 20 17 39 8 36.500Z" fill="#2f7fb4" />
          <path d="M14 18.500C24 14 30 -1 36 -3L22 33Z" fill="#1f4d6e" />
          <path d="M-5 29.500 14 18.500 21 22 10 37Z" fill="#5ab4de" />
          <path d="M10 37C20 32 30 2 37 -3.500C43 -2 49 32 57 47C48 38 42 37 36 44C31 50 27 54 22 54.500C20 48 17 41 10 37Z" fill="url(#gMat)" />
        </Icon>
      </Slot>
      <Divider $m="-1px 0 0 15px" />
      <Slot $ml={14}>
        <Icon>
          <path d="M-4 5C-4 3 -3 2 -1 2H12C15 2 16 6.500 19 6.500H53C55 6.500 56 8 56 10V20H-4Z" fill="#1f9dd4" />
          <rect x="-4" y="10" width="60" height="42" rx="3" fill="url(#gFold)" />
          <path d="M-4 46.500H56" stroke="#3aa6da" strokeWidth="0.900" />
          <circle cx="26" cy="29" r="11" fill="#22a5df" />
          <path d="M26 23V35M21.500 31 26 35.500 30.500 31" fill="none" stroke="#8fe0fc" strokeWidth="1.500" strokeLinecap="round" />
        </Icon>
      </Slot>
      <ThumbSlot>
        <svg width="60" height="44" viewBox="0 0 60 44">
          <rect width="60" height="31" fill="#fdfdfd" /><rect width="7" height="31" fill="#e6e2ea" />
          <path d="M7 3.500H60" stroke="#e4e4e4" strokeWidth="0.600" />
          <path d="M8 3H15M17 4H24M27 7H30M33 7H36M39 7H44" stroke="#b5b3b8" strokeWidth="0.700" />
          <g transform="translate(39 25) scale(0.385)"><NotesArt /></g>
        </svg>
      </ThumbSlot>
      <ThumbSlot>
        <svg width="60" height="44" viewBox="0 0 60 44">
          <rect y="1" width="60" height="30" fill="#fdfdfd" /><rect y="1" width="9" height="30" fill="#dcd9e2" />
          <path d="M2 6H7M2 9H6M2 13H7M2 16H7M2 19H6" stroke="#a9a7ae" strokeWidth="0.700" />
          <path d="M29 6V31M44 6V31" stroke="#dedede" strokeWidth="0.500" />
          <path d="M13 4H17M32 3.500H40M13 6.500H27" stroke="#9ea3ab" strokeWidth="0.700" />
          <path d="M30 8H41M30 10H41" stroke="#b5b8be" strokeWidth="1.200" />
          <rect x="29.500" y="12" width="13.500" height="1.800" fill="#2e7de8" />
          <rect x="45" y="8" width="14" height="9" fill="#9a68c8" /><rect x="46.500" y="10" width="11" height="4.500" fill="#e9e2f1" />
          <g transform="translate(39 25) scale(0.385)"><FinderArt /></g>
        </svg>
      </ThumbSlot>
      <Slot>
        <Icon>
          <path d="M5 2 9 -2 15 0 20 -4 26 -1 32 -3 38 -1 45 0 47 5 26 10 6 6Z" fill="#d5d8de" />
          <path d="M10 0 15 3 12 5ZM20 0 25 2 22 5ZM30 1 35 3 31 6ZM39 0 43 4 38 5Z" fill="#4a4d55" />
          <path d="M22 2 27 3 24 6Z" fill="#31a8c8" />
          <path d="M3 4C12 9 40 9 49 4L43 50C42 56 10 56 9 50Z" fill="url(#gTrash)" opacity="0.930" />
          <path d="M3 4C12 9 40 9 49 4" fill="none" stroke="#fafafa" strokeWidth="1.300" />
          <path d="M14 14 20 30 15 44M32 12 28 28 36 46M22 18 30 34" stroke="#c6c7cc" strokeWidth="1.200" fill="none" />
        </Icon>
      </Slot>
    </DockBar>
  );
}

/* ---------- App ---------- */

export default function App() {
  return (
    <Desktop>
      <Global />
      <Wallpaper />
      <DriveIcon width="46" height="16" viewBox="0 0 46 16">
        <path d="M2 2C2 1 3 0.500 4 0.500H42C43 0.500 44 1 44 2L46 16H0Z" fill="#cfcdcf" />
        <path d="M25 9C26 8 28 7.500 30 8" stroke="#777" fill="none" strokeWidth="1" />
      </DriveIcon>
      <MenuBar>
        <AppleSvg width="13" height="16" viewBox="0 0 13 16" fill="#2a1528">
          <path d="M9.100 0.200C9.200 1.100 8.800 2 8.300 2.600C7.800 3.200 7 3.700 6.200 3.600C6.100 2.800 6.500 1.900 7 1.400C7.500 0.800 8.400 0.300 9.100 0.200ZM11.800 5.500C10.900 6.100 10.300 6.900 10.300 8.100C10.300 9.500 11.100 10.500 12.400 11C12.100 11.900 11.700 12.700 11.100 13.500C10.500 14.400 9.900 15.200 9 15.200C8 15.200 7.700 14.600 6.600 14.600C5.500 14.600 5.100 15.200 4.200 15.200C3.300 15.300 2.600 14.300 2 13.400C0.800 11.600 -0.100 8.400 1.100 6.200C1.700 5.100 2.800 4.400 4 4.400C4.900 4.400 5.800 5 6.400 5C7 5 8 4.300 9.200 4.400C9.700 4.400 11 4.600 11.800 5.500Z" />
        </AppleSvg>
        <MenuItem $w={51} $bold>Knot</MenuItem>
        <MenuItem $w={42}>File</MenuItem>
        <MenuItem $w={44.5}>Edit</MenuItem>
        <MenuItem $w={54.5}>Tasks</MenuItem>
        <MenuItem $w={70.5}>Settings</MenuItem>
        <MenuItem $w={54.5}>Menu</MenuItem>
        <MenuItem $w={60}>Window</MenuItem>
        <MenuSpacer />
        <StatusIcon $ml={0} width="17" height="14" viewBox="0 0 17 14" fill="none">
          <g stroke="#2a1528" strokeOpacity="0.350" strokeWidth="1.900">
            <path d="M1 5C5 1.200 12 1.200 16 5" /><path d="M3.600 8C6.500 5.300 10.500 5.300 13.400 8" /><path d="M6.500 10.700C7.700 9.600 9.300 9.600 10.500 10.700" />
          </g>
          <path d="M2.500 1 14.500 13" stroke="#2a1528" strokeOpacity="0.800" strokeWidth="1.100" />
        </StatusIcon>
        <StatusIcon $ml={18} width="14" height="14" viewBox="0 0 14 14" fill="none" stroke="#2a1528" strokeWidth="1.500" strokeLinecap="round">
          <circle cx="5.900" cy="5.900" r="4.700" /><path d="M9.400 9.400 13 13" />
        </StatusIcon>
        <StatusIcon $ml={17} width="15" height="14" viewBox="0 0 15 14" fill="none" stroke="#2a1528">
          <rect x="0.700" y="0.900" width="13.400" height="5" rx="2.500" strokeWidth="1.200" /><circle cx="3.300" cy="3.400" r="1.600" fill="#2a1528" stroke="none" />
          <rect x="0.300" y="7.600" width="14.200" height="6.200" rx="3.100" fill="#2a1528" stroke="none" /><circle cx="11.300" cy="10.700" r="1.900" fill="#f4a9d4" stroke="none" />
        </StatusIcon>
        <Clock>Sat Oct 1  12:16 PM</Clock>
      </MenuBar>
      <Behavior />
      <Monitor />
      <Stimulus />
      <RandomDots />
      <FixTarget />
      <PsychPalette />
      <Summary />
      <Dock />
    </Desktop>
  );
}
